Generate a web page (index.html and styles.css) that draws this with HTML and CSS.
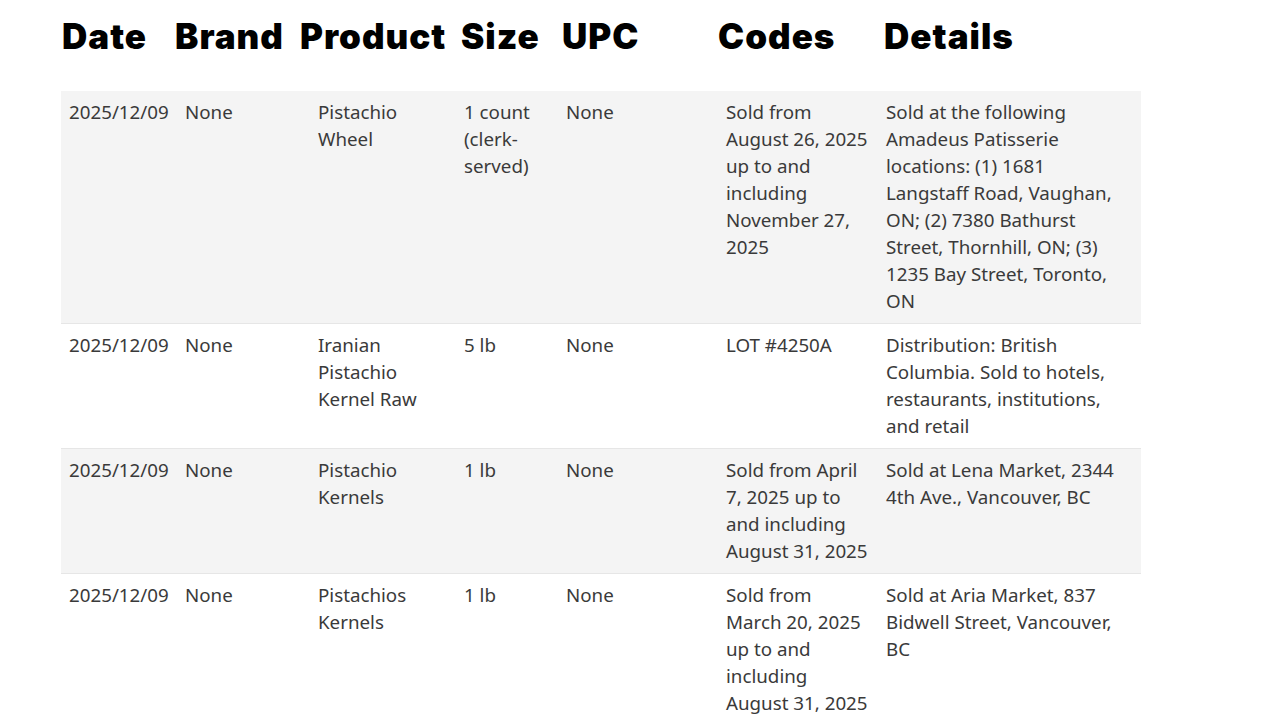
FILE: index.html
```html
<!DOCTYPE html>
<html lang="en">
<head>
<meta charset="utf-8">
<title>Recalls</title>
<link rel="stylesheet" href="styles.css">
</head>
<body>
<div class="heads">
  <span class="h h-date">Date</span>
  <span class="h h-brand">Brand</span>
  <span class="h h-product">Product</span>
  <span class="h h-size">Size</span>
  <span class="h h-upc">UPC</span>
  <span class="h h-codes">Codes</span>
  <span class="h h-details">Details</span>
</div>
<table class="recalls">
  <colgroup>
    <col class="c-date"><col class="c-brand"><col class="c-product"><col class="c-size"><col class="c-upc"><col class="c-codes"><col class="c-details">
  </colgroup>
  <tbody>
    <tr>
      <td>2025/12/09</td>
      <td>None</td>
      <td>Pistachio Wheel</td>
      <td>1 count (clerk-served)</td>
      <td>None</td>
      <td>Sold from August 26, 2025 up to and including November 27, 2025</td>
      <td>Sold at the following Amadeus Patisserie locations: (1) 1681 Langstaff Road, Vaughan, ON; (2) 7380 Bathurst Street, Thornhill, ON; (3) 1235 Bay Street, Toronto, ON</td>
    </tr>
    <tr>
      <td>2025/12/09</td>
      <td>None</td>
      <td>Iranian Pistachio Kernel Raw</td>
      <td>5 lb</td>
      <td>None</td>
      <td>LOT #4250A</td>
      <td>Distribution: British Columbia. Sold to hotels, restaurants, institutions, and retail</td>
    </tr>
    <tr>
      <td>2025/12/09</td>
      <td>None</td>
      <td>Pistachio Kernels</td>
      <td>1 lb</td>
      <td>None</td>
      <td>Sold from April 7, 2025 up to and including August 31, 2025</td>
      <td>Sold at Lena Market, 2344 4th Ave., Vancouver, BC</td>
    </tr>
    <tr>
      <td>2025/12/09</td>
      <td>None</td>
      <td>Pistachios Kernels</td>
      <td>1 lb</td>
      <td>None</td>
      <td>Sold from March 20, 2025 up to and including August 31, 2025</td>
      <td>Sold at Aria Market, 837 Bidwell Street, Vancouver, BC</td>
    </tr>
  </tbody>
</table>
</body>
</html>
```
FILE: styles.css
```css
html, body {
  margin: 0;
  padding: 0;
  background: #ffffff;
}

body {
  font-family: "Noto Sans", "Open Sans", sans-serif;
  color: #3a3a3a;
  overflow: hidden;
}

.heads {
  display: grid;
  grid-template-columns: 113px 125px 161px 101px 156px 166px auto;
  padding: 15px 0 0 62px;
  height: 75px;
  box-sizing: border-box;
}

.h {
  font-family: "Inter", "Liberation Sans", sans-serif;
  font-weight: 900;
  font-size: 35px;
  letter-spacing: 1px;
  line-height: 42px;
  color: #000000;
  white-space: nowrap;
}

.recalls {
  margin: 16px 0 0 61px;
  width: 1080px;
  table-layout: fixed;
  border-collapse: collapse;
  font-size: 18.75px;
  line-height: 27px;
}

.c-date { width: 116px; }
.c-brand { width: 133px; }
.c-product { width: 146px; }
.c-size { width: 102px; }
.c-upc { width: 160px; }
.c-codes { width: 160px; }
.c-details { width: 263px; }

.recalls td {
  padding: 7px 8px 9px;
  vertical-align: top;
  text-align: left;
}

.recalls td:last-child {
  padding-right: 17px;
}

.recalls tr + tr td {
  border-top: 1px solid #e6e6e6;
}

.recalls tr:nth-child(odd) {
  background: #f4f4f4;
}
```
